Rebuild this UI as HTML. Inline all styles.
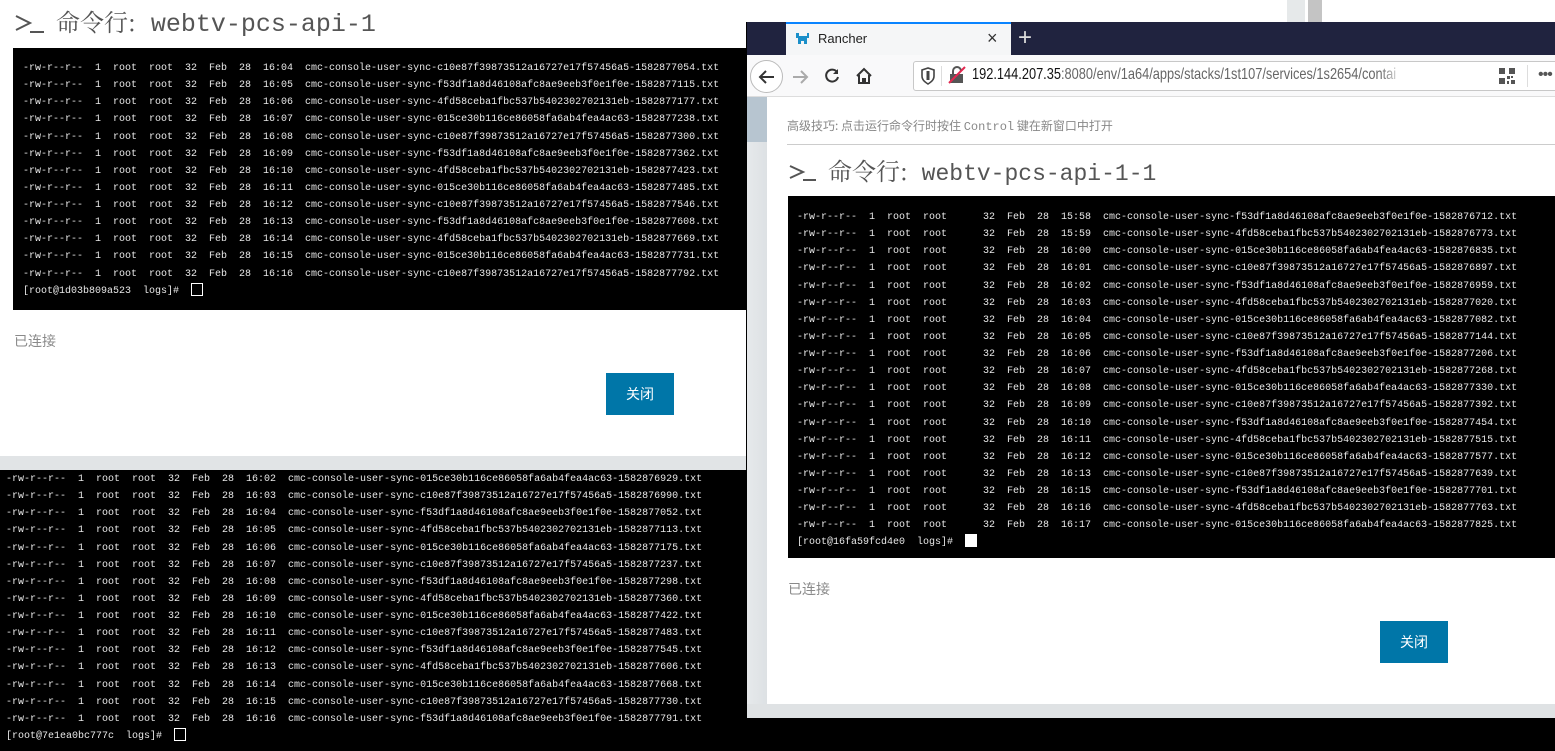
<!DOCTYPE html>
<html><head><meta charset="utf-8">
<style>
*{margin:0;padding:0;box-sizing:border-box}
body{width:1555px;height:751px;overflow:hidden;background:#fff;position:relative;font-family:"Liberation Sans","Noto Sans CJK SC",sans-serif}
.abs{position:absolute}
.term{position:absolute;background:#000;color:#e8e8e8;font-family:"Liberation Mono","Noto Sans CJK SC",monospace;font-size:10px;line-height:17.13px;white-space:pre;overflow:hidden}
.cur{display:inline-block;width:12px;height:13px;border:1px solid #fff;vertical-align:-3px}
.title{position:absolute;color:#555;white-space:nowrap}
.title .cn{font-family:"Noto Serif CJK SC",serif;font-size:24px}
.title .en{font-family:"Liberation Mono",monospace}
.btn{position:absolute;background:#0076a8;color:#fff;font-size:14px;text-align:center;line-height:42px;width:68px;height:42px;font-family:"Noto Sans CJK SC",sans-serif}
.gray{color:#8a8a8a;font-size:14px;font-family:"Noto Sans CJK SC",sans-serif}
</style></head><body>

<div class="title" style="left:14px;top:4px;height:34px;line-height:34px">
<svg width="32" height="22" style="vertical-align:-3px" viewBox="0 0 32 22"><path d="M2 4 L16 11 L2 18" fill="none" stroke="#555" stroke-width="2"/><path d="M16 20 H30" stroke="#555" stroke-width="2"/></svg><span class="cn" style="margin-left:10px">命令行:</span><span class="en" style="font-size:25px"> webtv-pcs-api-1</span></div>

<div class="term" style="left:13px;top:48px;width:733px;height:262px;padding:12px 0 0 10px">-rw-r--r--  1  root  root  32  Feb  28  16:04  cmc-console-user-sync-c10e87f39873512a16727e17f57456a5-1582877054.txt
-rw-r--r--  1  root  root  32  Feb  28  16:05  cmc-console-user-sync-f53df1a8d46108afc8ae9eeb3f0e1f0e-1582877115.txt
-rw-r--r--  1  root  root  32  Feb  28  16:06  cmc-console-user-sync-4fd58ceba1fbc537b5402302702131eb-1582877177.txt
-rw-r--r--  1  root  root  32  Feb  28  16:07  cmc-console-user-sync-015ce30b116ce86058fa6ab4fea4ac63-1582877238.txt
-rw-r--r--  1  root  root  32  Feb  28  16:08  cmc-console-user-sync-c10e87f39873512a16727e17f57456a5-1582877300.txt
-rw-r--r--  1  root  root  32  Feb  28  16:09  cmc-console-user-sync-f53df1a8d46108afc8ae9eeb3f0e1f0e-1582877362.txt
-rw-r--r--  1  root  root  32  Feb  28  16:10  cmc-console-user-sync-4fd58ceba1fbc537b5402302702131eb-1582877423.txt
-rw-r--r--  1  root  root  32  Feb  28  16:11  cmc-console-user-sync-015ce30b116ce86058fa6ab4fea4ac63-1582877485.txt
-rw-r--r--  1  root  root  32  Feb  28  16:12  cmc-console-user-sync-c10e87f39873512a16727e17f57456a5-1582877546.txt
-rw-r--r--  1  root  root  32  Feb  28  16:13  cmc-console-user-sync-f53df1a8d46108afc8ae9eeb3f0e1f0e-1582877608.txt
-rw-r--r--  1  root  root  32  Feb  28  16:14  cmc-console-user-sync-4fd58ceba1fbc537b5402302702131eb-1582877669.txt
-rw-r--r--  1  root  root  32  Feb  28  16:15  cmc-console-user-sync-015ce30b116ce86058fa6ab4fea4ac63-1582877731.txt
-rw-r--r--  1  root  root  32  Feb  28  16:16  cmc-console-user-sync-c10e87f39873512a16727e17f57456a5-1582877792.txt
[root@1d03b809a523  logs]#  <span class="cur"></span></div>

<div class="abs gray" style="left:14px;top:331px">已连接</div>
<div class="btn" style="left:606px;top:373px">关闭</div>

<div class="abs" style="left:0;top:456px;width:746px;height:14px;background:#e1e4e6"></div>

<div class="term" style="left:0;top:470px;width:746px;height:281px;padding-top:1px;padding-left:6px"><div>-rw-r--r--  1  root  root  32  Feb  28  16:02  cmc-console-user-sync-015ce30b116ce86058fa6ab4fea4ac63-1582876929.txt
-rw-r--r--  1  root  root  32  Feb  28  16:03  cmc-console-user-sync-c10e87f39873512a16727e17f57456a5-1582876990.txt
-rw-r--r--  1  root  root  32  Feb  28  16:04  cmc-console-user-sync-f53df1a8d46108afc8ae9eeb3f0e1f0e-1582877052.txt
-rw-r--r--  1  root  root  32  Feb  28  16:05  cmc-console-user-sync-4fd58ceba1fbc537b5402302702131eb-1582877113.txt
-rw-r--r--  1  root  root  32  Feb  28  16:06  cmc-console-user-sync-015ce30b116ce86058fa6ab4fea4ac63-1582877175.txt
-rw-r--r--  1  root  root  32  Feb  28  16:07  cmc-console-user-sync-c10e87f39873512a16727e17f57456a5-1582877237.txt
-rw-r--r--  1  root  root  32  Feb  28  16:08  cmc-console-user-sync-f53df1a8d46108afc8ae9eeb3f0e1f0e-1582877298.txt
-rw-r--r--  1  root  root  32  Feb  28  16:09  cmc-console-user-sync-4fd58ceba1fbc537b5402302702131eb-1582877360.txt
-rw-r--r--  1  root  root  32  Feb  28  16:10  cmc-console-user-sync-015ce30b116ce86058fa6ab4fea4ac63-1582877422.txt
-rw-r--r--  1  root  root  32  Feb  28  16:11  cmc-console-user-sync-c10e87f39873512a16727e17f57456a5-1582877483.txt
-rw-r--r--  1  root  root  32  Feb  28  16:12  cmc-console-user-sync-f53df1a8d46108afc8ae9eeb3f0e1f0e-1582877545.txt
-rw-r--r--  1  root  root  32  Feb  28  16:13  cmc-console-user-sync-4fd58ceba1fbc537b5402302702131eb-1582877606.txt
-rw-r--r--  1  root  root  32  Feb  28  16:14  cmc-console-user-sync-015ce30b116ce86058fa6ab4fea4ac63-1582877668.txt
-rw-r--r--  1  root  root  32  Feb  28  16:15  cmc-console-user-sync-c10e87f39873512a16727e17f57456a5-1582877730.txt
-rw-r--r--  1  root  root  32  Feb  28  16:16  cmc-console-user-sync-f53df1a8d46108afc8ae9eeb3f0e1f0e-1582877791.txt
[root@7e1ea0bc777c  logs]#  <span class="cur"></span></div></div>

<div class="abs" style="left:1287px;top:0;width:18px;height:22px;background:#e6e9ea"></div>
<div class="abs" style="left:1308px;top:0;width:14px;height:22px;background:#c4c4c4"></div>

<div class="abs" style="left:746px;top:22px;width:809px;height:729px;background:#000"></div>
<div class="abs" style="left:747px;top:22px;width:808px;height:33px;background:#20233f"></div>
<div class="abs" style="left:786px;top:22px;width:225px;height:33px;background:#f5f6f7;border-top:2px solid #0a84ff"></div>
<svg class="abs" style="left:795px;top:31px" width="16" height="16" viewBox="0 0 16 16"><path d="M1 2 h3 v3 h8 v-3 h2 v5 h-2 v6 h-3 v-3 h-3 v3 h-3 v-6 h-2z" fill="#1b8fc9"/></svg>
<div class="abs" style="left:818px;top:31px;font-size:13px;color:#222">Rancher</div>
<div class="abs" style="left:987px;top:28px;font-size:18px;color:#333">×</div>
<div class="abs" style="left:1018px;top:24px;font-size:24px;color:#ddd;font-weight:300">+</div>

<div class="abs" style="left:747px;top:55px;width:808px;height:42px;background:#f9f9fa;border-bottom:1px solid #ddd"></div>
<div class="abs" style="left:750px;top:60px;width:33px;height:33px;border:1px solid #bbb;border-radius:50%;background:#fff"></div>
<svg class="abs" style="left:757px;top:67px" width="20" height="20" viewBox="0 0 20 20"><path d="M17 10H4M9 4L3 10l6 6" fill="none" stroke="#333" stroke-width="2"/></svg>
<svg class="abs" style="left:790px;top:67px" width="20" height="20" viewBox="0 0 20 20"><path d="M3 10h13M11 4l6 6-6 6" fill="none" stroke="#aaa" stroke-width="2"/></svg>
<svg class="abs" style="left:822px;top:66px" width="20" height="20" viewBox="0 0 20 20"><path d="M15 6A6 6 0 1 0 16 11" fill="none" stroke="#333" stroke-width="2"/><path d="M16 3v5h-5z" fill="#333"/></svg>
<svg class="abs" style="left:854px;top:66px" width="20" height="20" viewBox="0 0 20 20"><path d="M3 10L10 3l7 7M5 9v8h4v-4h2v4h4V9" fill="none" stroke="#333" stroke-width="2"/></svg>
<div class="abs" style="left:913px;top:61px;width:650px;height:30px;background:#fff;border:1px solid #c8c8c8;border-radius:3px"></div>
<svg class="abs" style="left:920px;top:67px" width="16" height="18" viewBox="0 0 16 18"><path d="M8 1L2 3v6c0 4 3 6 6 8 3-2 6-4 6-8V3z" fill="none" stroke="#444" stroke-width="1.6"/><path d="M8 4v9" stroke="#444" stroke-width="3"/></svg>
<div class="abs" style="left:941px;top:66px;width:1px;height:20px;background:#ddd"></div>
<svg class="abs" style="left:948px;top:66px" width="18" height="18" viewBox="0 0 18 18"><rect x="2" y="8" width="13" height="9" fill="#555"/><path d="M5 8V5a4 4 0 0 1 8 0" fill="none" stroke="#555" stroke-width="2"/><path d="M1 17L17 1" stroke="#e22850" stroke-width="2"/></svg>
<div class="abs" style="left:972px;top:66px;width:430px;overflow:hidden;height:22px"><div style="font-size:16px;color:#111;white-space:nowrap;transform:scaleX(0.8);transform-origin:0 0">192.144.207.35<span style="color:#666">:8080/env/1a64/apps/stacks/1st107/services/1s2654/contai</span></div></div>
<div class="abs" style="left:1380px;top:62px;width:30px;height:28px;background:linear-gradient(to right,rgba(255,255,255,0),#fff 80%)"></div>
<svg class="abs" style="left:1499px;top:68px" width="16" height="16" viewBox="0 0 16 16" fill="#555"><rect x="0" y="0" width="6" height="6"/><rect x="10" y="0" width="6" height="6"/><rect x="0" y="10" width="6" height="6"/><rect x="8" y="8" width="3" height="3"/><rect x="12" y="12" width="4" height="4"/><rect x="12" y="8" width="2" height="2"/><rect x="8" y="13" width="2" height="3"/></svg>
<div class="abs" style="left:1527px;top:65px;width:1px;height:22px;background:#ddd"></div>
<div class="abs" style="left:1538px;top:66px;font-size:16px;color:#555;letter-spacing:-1px">•••</div>

<div class="abs" style="left:747px;top:97px;width:808px;height:607px;background:#fff"></div>
<div class="abs" style="left:747px;top:97px;width:20px;height:607px;background:linear-gradient(to right,#e6e9eb,#dde1e4)"></div>
<div class="abs" style="left:747px;top:97px;width:20px;height:45px;background:#b7c5d0"></div>
<div class="abs" style="left:747px;top:704px;width:808px;height:14px;background:#dfe2e4"></div>

<div class="abs" style="left:787px;top:117px;font-size:12px;color:#888;font-family:'Noto Sans CJK SC',sans-serif;white-space:nowrap">高级技巧: 点击运行命令行时按住 <span style="font-family:'Liberation Mono',monospace;font-size:12px">Control</span> 键在新窗口中打开</div>
<div class="abs" style="left:787px;top:144px;width:768px;height:1px;background:#ccc"></div>

<div class="title" style="left:788px;top:153px;height:34px;line-height:34px">
<svg width="30" height="20" style="vertical-align:-2px" viewBox="0 0 30 20"><path d="M2 4 L15 10 L2 16" fill="none" stroke="#555" stroke-width="2"/><path d="M15 18 H28" stroke="#555" stroke-width="2"/></svg><span class="cn" style="margin-left:10px">命令行:</span><span class="en" style="font-size:23px"> webtv-pcs-api-1-1</span></div>

<div class="term" style="left:788px;top:196px;width:767px;height:362px;padding:13px 0 0 9px">-rw-r--r--  1  root  root      32  Feb  28  15:58  cmc-console-user-sync-f53df1a8d46108afc8ae9eeb3f0e1f0e-1582876712.txt
-rw-r--r--  1  root  root      32  Feb  28  15:59  cmc-console-user-sync-4fd58ceba1fbc537b5402302702131eb-1582876773.txt
-rw-r--r--  1  root  root      32  Feb  28  16:00  cmc-console-user-sync-015ce30b116ce86058fa6ab4fea4ac63-1582876835.txt
-rw-r--r--  1  root  root      32  Feb  28  16:01  cmc-console-user-sync-c10e87f39873512a16727e17f57456a5-1582876897.txt
-rw-r--r--  1  root  root      32  Feb  28  16:02  cmc-console-user-sync-f53df1a8d46108afc8ae9eeb3f0e1f0e-1582876959.txt
-rw-r--r--  1  root  root      32  Feb  28  16:03  cmc-console-user-sync-4fd58ceba1fbc537b5402302702131eb-1582877020.txt
-rw-r--r--  1  root  root      32  Feb  28  16:04  cmc-console-user-sync-015ce30b116ce86058fa6ab4fea4ac63-1582877082.txt
-rw-r--r--  1  root  root      32  Feb  28  16:05  cmc-console-user-sync-c10e87f39873512a16727e17f57456a5-1582877144.txt
-rw-r--r--  1  root  root      32  Feb  28  16:06  cmc-console-user-sync-f53df1a8d46108afc8ae9eeb3f0e1f0e-1582877206.txt
-rw-r--r--  1  root  root      32  Feb  28  16:07  cmc-console-user-sync-4fd58ceba1fbc537b5402302702131eb-1582877268.txt
-rw-r--r--  1  root  root      32  Feb  28  16:08  cmc-console-user-sync-015ce30b116ce86058fa6ab4fea4ac63-1582877330.txt
-rw-r--r--  1  root  root      32  Feb  28  16:09  cmc-console-user-sync-c10e87f39873512a16727e17f57456a5-1582877392.txt
-rw-r--r--  1  root  root      32  Feb  28  16:10  cmc-console-user-sync-f53df1a8d46108afc8ae9eeb3f0e1f0e-1582877454.txt
-rw-r--r--  1  root  root      32  Feb  28  16:11  cmc-console-user-sync-4fd58ceba1fbc537b5402302702131eb-1582877515.txt
-rw-r--r--  1  root  root      32  Feb  28  16:12  cmc-console-user-sync-015ce30b116ce86058fa6ab4fea4ac63-1582877577.txt
-rw-r--r--  1  root  root      32  Feb  28  16:13  cmc-console-user-sync-c10e87f39873512a16727e17f57456a5-1582877639.txt
-rw-r--r--  1  root  root      32  Feb  28  16:15  cmc-console-user-sync-f53df1a8d46108afc8ae9eeb3f0e1f0e-1582877701.txt
-rw-r--r--  1  root  root      32  Feb  28  16:16  cmc-console-user-sync-4fd58ceba1fbc537b5402302702131eb-1582877763.txt
-rw-r--r--  1  root  root      32  Feb  28  16:17  cmc-console-user-sync-015ce30b116ce86058fa6ab4fea4ac63-1582877825.txt
[root@16fa59fcd4e0  logs]#  <span class="cur" style="background:#fff"></span></div>

<div class="abs gray" style="left:788px;top:579px">已连接</div>
<div class="btn" style="left:1380px;top:621px">关闭</div>

</body></html>
